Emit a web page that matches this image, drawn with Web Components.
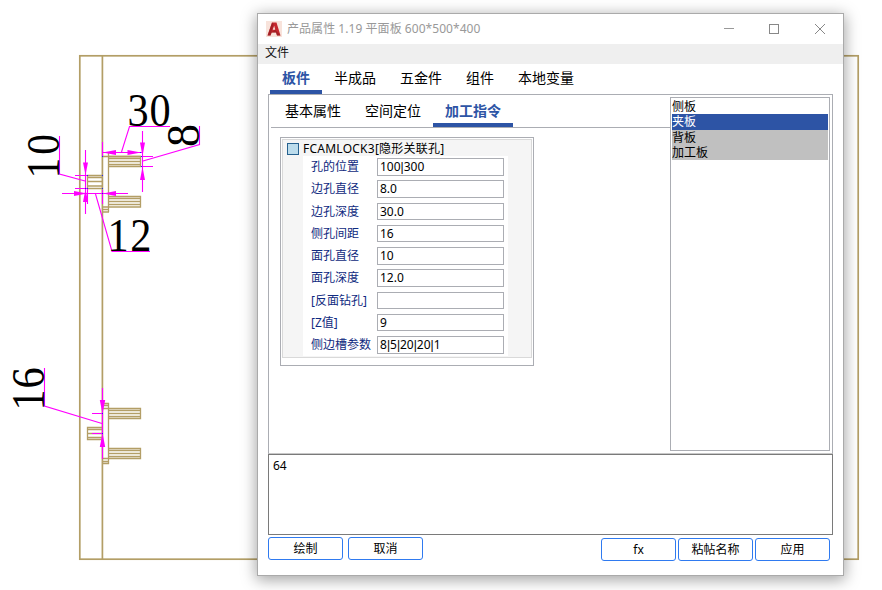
<!DOCTYPE html>
<html lang="zh-CN">
<head>
<meta charset="utf-8">
<title>产品属性</title>
<style>
html,body{margin:0;width:882px;height:590px;overflow:hidden;background:#fff}
body{font:12px/16px "Noto Sans","Noto Sans CJK SC",sans-serif;color:#000}
</style>
</head>
<body>
<cad-desktop></cad-desktop>
<script>
function define(name, html, init) {
  const t = document.createElement('template');
  t.innerHTML = html;
  customElements.define(name, class extends HTMLElement {
    connectedCallback() {
      if (this.shadowRoot) return;
      this.attachShadow({mode: 'open'}).appendChild(t.content.cloneNode(true));
      if (init) init(this, this.shadowRoot);
    }
  });
}

define('cad-drawing', `
<style>
:host{display:block;width:882px;height:590px}
svg{display:block}
.w{stroke:#b39e66;fill:none}
.m{stroke:#f0f;fill:none;stroke-width:1.1}
.a{fill:#f0f}
text{font-family:"Liberation Serif",serif;font-size:46px;fill:#000}
</style>
<svg width="882" height="590" viewBox="0 0 882 590">
  <g class="w" stroke-width="1.7">
    <rect x="79.8" y="55.8" width="778.4" height="503.4"/>
    <path d="M102.4 56V559"/>
  </g>
  <g class="w" stroke-width="1.3">
    <path d="M102 156.5H141M108.5 153V212M103 207H108M103 209.5H108M103 212H109"/>
    <path d="M108.5 156.5H140.5V166.5H108.5M108 158.5H140M108 161.5H140M108 164.5H140"/>
    <path d="M108.5 196.5H140.5V207H108.5M108 198.5H140M108 201.5H140M108 204.5H140"/>
    <path d="M102 175.5H87.5V188.5H102M88 177.5H102M88 181.5H102M88 186H102"/>
    <path d="M103 403.5H109M103 405.5H108M108.5 403V464M103 408.5H109M103 458.5H109M103 461.5H109M103 463.5H109"/>
    <path d="M108.5 408.5H140.5V418.5H108.5M108 410.5H140M108 413.5H140M108 416.5H140"/>
    <path d="M108.5 448.5H140.5V458.5H108.5M108 450.5H140M108 453.5H140M108 456.5H140"/>
    <path d="M102 427.5H87.5V439.5H102M88 429.5H102M88 433.5H102M88 437.5H102"/>
  </g>
  <g class="m">
    <path d="M102.5 142V156M102.5 152.5H142M121.5 152L129.5 126.5H170"/>
    <path d="M142.5 131V192M142 156.5H153M142 166.5H153M143 161L199.5 144.5V126"/>
    <path d="M85.5 150V214M75 175.5H87M75 188.5H87M85 181L59.5 174V136"/>
    <path d="M62 193.5H128M87.5 189V204M102.5 190V204M95.5 194L112 251.5H150"/>
    <path d="M102.5 388V459M92 413.5H103M92 433.5H103M102 423.5L44.5 406V368"/>
  </g>
  <g class="a">
    <path d="M102.5 152.5L116 150V155ZM141 152.5L127.500 150V155Z"/>
    <path d="M142.500 156L140 142.500H145ZM142.500 167L140 180H145Z"/>
    <path d="M85.500 175L83 162.500H88ZM85.500 189L83 202H88Z"/>
    <path d="M87 193.500L74 191V196ZM103 193.500L116 191V196Z"/>
    <path d="M102.500 414L99.800 400H105.200ZM102.500 433L99.800 447H105.200Z"/>
  </g>
  <g fill="#22f">
    <path d="M102 156h1v1h-1zM140 152h1v1h-1zM141 156h1v1h-1zM141 166h1v1h-1zM102 175h1v1h-1zM87 175h1v1h-1zM85 188h1v1h-1zM87 188h1v1h-1zM102 188h1v1h-1zM102 193h1v1h-1zM102 413h1v1h-1zM102 433h1v1h-1z"/>
  </g>
  <text transform="translate(127.500 125.500) scale(.92 1)" x="0 24">30</text>
  <text transform="translate(107.500 251) scale(.92 1)" x="0 24.800">12</text>
  <text transform="translate(58.800 178.500) rotate(-90) scale(.9 1)" x="0 26.500">10</text>
  <text transform="translate(199 147) rotate(-90)">8</text>
  <text transform="translate(44.300 410.500) rotate(-90) scale(.92 1)" x="0 24">16</text>
</svg>`);

define('title-bar', `
<style>
:host{display:flex;height:30px;align-items:center;padding:0 17px 0 8px;color:#999;box-sizing:border-box}
.logo{margin-right:5px;flex:none}
.t{flex:1;white-space:pre;letter-spacing:.05px}
.c{margin-left:34px;flex:none;display:block}
.min{margin-right:-1px}
</style>
<svg class="logo" width="16" height="16" viewBox="0 0 16 16"><rect width="16" height="16" fill="#f8e3db"/><path d="M1.500 14.500L6 1.500H10.500L14.500 14.500H11L10 11.500H5.800L4.500 14.500ZM6.700 8.700H9.200L8.200 4.800Z" fill="#c5272d" fill-rule="evenodd"/><path d="M1.500 14.500L6 1.500 7.500 3 4.500 14.500ZM9.200 8.700L14.500 14.500H11L10 11.500H5Z" fill="#8d1a20" opacity=".6"/></svg>
<span class="t"><slot></slot></span>
<svg class="c min" width="12" height="12" viewBox="0 0 12 12" fill="none" stroke="#999"><path d="M1 5.500H11"/></svg>
<svg class="c" width="12" height="12" viewBox="0 0 12 12" fill="none" stroke="#888"><rect x="1.500" y="1.500" width="9" height="9"/></svg>
<svg class="c" width="12" height="12" viewBox="0 0 12 12" fill="none" stroke="#888"><path d="M1 1L11 11M11 1L1 11"/></svg>`);

define('menu-bar', `
<style>:host{display:flex;align-items:center;height:20px;background:#efefef;padding:0 0 2px 7px;box-sizing:border-box;color:#111}</style><slot></slot>`);

define('tab-strip', `<style>:host{display:flex}</style><slot></slot>`);
define('tab-item', `
<style>
:host{display:block;box-sizing:border-box;height:30px;padding:0 12px;font-size:14px;line-height:27px;border-bottom:4px solid transparent}
:host([active]){color:#2d54a5;font-weight:700;border-color:#2d54a5}
</style><slot></slot>`);

define('panel-list', `
<style>:host{display:block;box-sizing:border-box;width:160px;height:354px;border:1px solid #abadb3;background:#fff;padding:1px}</style><slot></slot>`);
define('list-row', `
<style>
:host{display:block;height:15.330px;line-height:16.600px;background:#c0c0c0}
:host([plain]){background:none}
:host([selected]){background:#2d54a5;color:#fff}
</style><slot></slot>`);

define('field-row', `
<style>
:host{display:grid;grid-template-columns:66px 127px;height:22.250px;align-items:start;color:#0f2a80}
label{line-height:17px;white-space:nowrap}
.v{box-sizing:border-box;height:17.500px;border:1px solid #abadb3;background:#fff;color:#000;padding-left:2px;line-height:15.500px}
.bar{font-family:"Liberation Sans",sans-serif}
</style><label></label><div class="v"></div>`,
  (el, r) => {
    r.querySelector('label').textContent = el.getAttribute('label');
    const box = r.querySelector('.v');
    (el.getAttribute('value') || '').split('|').forEach((part, i) => {
      if (i) {
        const bar = document.createElement('span');
        bar.className = 'bar';
        bar.textContent = '|';
        box.append(bar);
      }
      box.append(part);
    });
  });

define('command-group', `
<style>
:host{display:block;box-sizing:border-box;width:254px;height:229px;border:1px solid #abadb3;padding:1px}
.in{box-sizing:border-box;width:250px;height:219px;border:1px solid #d9d9d9;background:#f5f5f5;padding:0 0 0 4px}
.h{display:flex;align-items:flex-start;height:16px;gap:4px;white-space:nowrap}
.box{width:12px;height:12px;box-sizing:border-box;border:1px solid #26618f;background:#bcdcec;margin-top:3px}
.b{margin-left:16px;width:205px;height:200px;box-sizing:border-box;background:#fff;padding:2px 0 0 8px}
.h span{letter-spacing:.25px;line-height:18px}
</style>
<div class="in"><div class="h"><i class="box"></i><span><slot name="title"></slot></span></div><div class="b"><slot></slot></div></div>`);

define('push-button', `
<style>:host{display:block;box-sizing:border-box;width:75px;height:23px;border:1px solid #2f7af0;border-radius:3px;text-align:center;line-height:22px;background:#fff}</style><slot></slot>`);

define('property-window', `
<style>
:host{display:flex;flex-direction:column;box-sizing:border-box;width:587px;height:563px;border:1px solid #aaa;background:#fff;box-shadow:0 3px 14px 1px rgba(0,0,0,.36)}
.tabs{margin-left:12px}
.panel{margin-left:10px;width:565px;height:360px;box-sizing:border-box;border:1px solid #abadb3;border-bottom-color:#c8c8c8;display:flex;padding:2px 2px 0}
.left{flex:1}
.sub{height:31px;box-sizing:border-box;border-bottom:1px solid #abadb3;padding-left:2px}
.group{margin:9px 0 0 9px}
.log{margin-left:10px;width:565px;height:81px;box-sizing:border-box;border:1px solid #7a7a7a;padding:3px 4px}
.foot{display:flex;gap:5px;padding:2px 13px 0 10px}
.right{display:flex;gap:2px;margin:1px 0 0 auto}
</style>
<title-bar>产品属性 1.19 平面板 600*500*400</title-bar>
<menu-bar>文件</menu-bar>
<tab-strip class="tabs"><tab-item active>板件</tab-item><tab-item>半成品</tab-item><tab-item>五金件</tab-item><tab-item>组件</tab-item><tab-item>本地变量</tab-item></tab-strip>
<div class="panel">
  <div class="left">
    <tab-strip class="sub"><tab-item>基本属性</tab-item><tab-item>空间定位</tab-item><tab-item active>加工指令</tab-item></tab-strip>
    <command-group class="group"><span slot="title">FCAMLOCK3[隐形关联孔]</span>
      <field-row label="孔的位置" value="100|300"></field-row>
      <field-row label="边孔直径" value="8.0"></field-row>
      <field-row label="边孔深度" value="30.0"></field-row>
      <field-row label="侧孔间距" value="16"></field-row>
      <field-row label="面孔直径" value="10"></field-row>
      <field-row label="面孔深度" value="12.0"></field-row>
      <field-row label="[反面钻孔]"></field-row>
      <field-row label="[Z值]" value="9"></field-row>
      <field-row label="侧边槽参数" value="8|5|20|20|1"></field-row>
    </command-group>
  </div>
  <panel-list><list-row plain>侧板</list-row><list-row selected>夹板</list-row><list-row>背板</list-row><list-row>加工板</list-row></panel-list>
</div>
<div class="log">64</div>
<div class="foot"><push-button>绘制</push-button><push-button>取消</push-button><div class="right"><push-button>fx</push-button><push-button>粘帖名称</push-button><push-button>应用</push-button></div></div>`);

define('cad-desktop', `
<style>
:host{display:block;position:relative;width:882px;height:590px;overflow:hidden}
property-window{position:absolute;left:257px;top:13px}
</style>
<cad-drawing></cad-drawing><property-window></property-window>`);
</script>
</body>
</html>
